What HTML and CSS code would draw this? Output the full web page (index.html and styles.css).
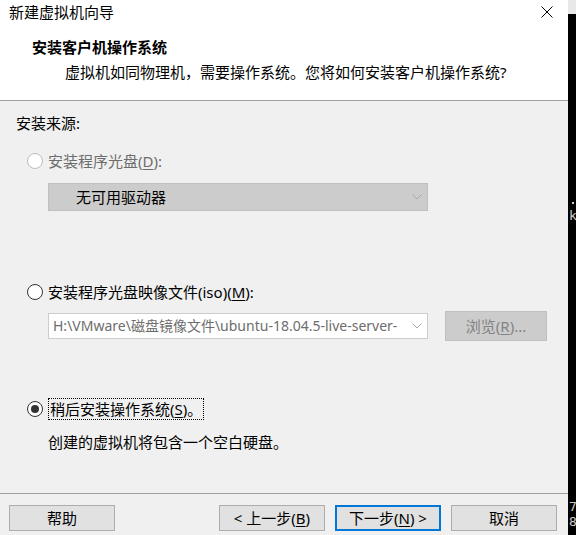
FILE: index.html
```html
<!DOCTYPE html>
<html lang="zh-CN">
<head>
<meta charset="utf-8">
<title>新建虚拟机向导</title>
<link rel="stylesheet" href="styles.css">
</head>
<body>
<div class="screen">
  <div class="dialog">
    <div class="top">
      <div class="titlebar">
        <span class="title">新建虚拟机向导</span>
        <svg class="close" viewBox="0 0 12 12" width="12" height="12"><path d="M0.5 0.5 L11.5 11.5 M11.5 0.5 L0.5 11.5" stroke="#000" stroke-width="1" fill="none"/></svg>
      </div>
      <div class="head-title">安装客户机操作系统</div>
      <div class="head-sub">虚拟机如同物理机，需要操作系统。您将如何安装客户机操作系统?</div>
    </div>
    <div class="body">
      <div class="section-label">安装来源:</div>
      <div class="radio-row row1 disabled">
        <span class="radio"></span>
        <span class="label">安装程序光盘(<u>D</u>):</span>
      </div>
      <div class="combo combo-disabled">
        <span class="combo-text">无可用驱动器</span>
        <svg class="chev" viewBox="0 0 10 6" width="10" height="6"><polyline points="0.5,0.5 5,5 9.5,0.5" fill="none" stroke="#a8a8a8" stroke-width="1"/></svg>
      </div>
      <div class="radio-row row2">
        <span class="radio"></span>
        <span class="label">安装程序光盘映像文件(iso)(<u>M</u>):</span>
      </div>
      <div class="iso-row">
        <div class="combo combo-iso">
          <span class="combo-text">H:\VMware\磁盘镜像文件\ubuntu-18.04.5-live-server-</span>
          <svg class="chev" viewBox="0 0 10 6" width="10" height="6"><polyline points="0.5,0.5 5,5 9.5,0.5" fill="none" stroke="#a8a8a8" stroke-width="1"/></svg>
        </div>
        <div class="btn btn-disabled">浏览(<u>R</u>)...</div>
      </div>
      <div class="radio-row row3">
        <span class="radio checked"></span>
        <span class="label focus">稍后安装操作系统(<u>S</u>)。</span>
      </div>
      <div class="desc">创建的虚拟机将包含一个空白硬盘。</div>
    </div>
    <div class="footer">
      <div class="btn">帮助</div>
      <div class="btn-group">
        <div class="btn">&lt; 上一步(<u>B</u>)</div>
        <div class="btn btn-default">下一步(<u>N</u>) &gt;</div>
        <div class="btn">取消</div>
      </div>
    </div>
  </div>
  <div class="strip">
    <div class="strip-top"></div>
    <div class="strip-dot"></div>
    <div class="strip-char k">k</div>
    <div class="strip-char n7">7</div>
    <div class="strip-char n8">8</div>
  </div>
</div>
</body>
</html>
```

FILE: styles.css
```css
* { box-sizing: border-box; }
html, body { margin: 0; padding: 0; }
body {
  width: 576px;
  height: 535px;
  overflow: hidden;
  font-family: "Noto Sans", "Noto Sans CJK SC", sans-serif;
  font-size: 15px;
  line-height: 20px;
  color: #000;
  background: #000;
}
u { text-decoration: underline; text-underline-offset: 2px; }

.screen { display: flex; width: 576px; height: 535px; }
.dialog {
  width: 568px;
  height: 535px;
  display: flex;
  flex-direction: column;
  background: #f0f0f0;
}

.top {
  height: 101px;
  flex: none;
  background: #fff;
  border-bottom: 1px solid #a0a0a0;
}
.titlebar {
  height: 23px;
  display: flex;
  align-items: center;
  justify-content: space-between;
  padding: 0 15px 0 9px;
}
.close { display: block; }
.head-title { font-weight: bold; margin: 14px 0 0 32px; }
.head-sub { margin: 5px 0 0 65px; }

.body {
  height: 393px;
  flex: none;
  border-bottom: 1px solid #a0a0a0;
  padding: 12px 0 0 16px;
}
.radio-row {
  display: flex;
  align-items: center;
  margin-left: 11px;
}
.row1 { margin-top: 18px; height: 20px; }
.row2 { margin-top: 71px; height: 20px; }
.row3 { margin-top: 57px; height: 22px; }
.radio {
  width: 16px;
  height: 16px;
  flex: none;
  border-radius: 50%;
  border: 1px solid #333;
  background: #fff;
  margin-right: 5px;
  display: flex;
  align-items: center;
  justify-content: center;
}
.disabled .radio { border-color: #bcbcbc; }
.disabled .label { color: #6d6d6d; }
.radio.checked::after {
  content: "";
  width: 8px;
  height: 8px;
  border-radius: 50%;
  background: #333;
}
.label.focus {
  border: 1px dotted #000;
  padding: 0 1px;
}

.combo {
  width: 380px;
  display: flex;
  align-items: center;
  justify-content: space-between;
  padding-right: 5px;
}
.combo-disabled {
  margin: 12px 0 0 32px;
  height: 28px;
  background: #cccccc;
  border: 1px solid #bfbfbf;
  padding-left: 27px;
}
.iso-row {
  display: flex;
  align-items: center;
  margin: 9px 0 0 32px;
  height: 30px;
}
.combo-iso {
  height: 26px;
  background: #fff;
  border: 1px solid #cccccc;
  padding-left: 4px;
}
.combo-iso .combo-text {
  white-space: nowrap;
  color: #6d6d6d;
  font-size: 14px;
}
.chev { display: block; flex: none; }

.btn {
  width: 106px;
  height: 26px;
  display: flex;
  align-items: center;
  justify-content: center;
  background: #e1e1e1;
  border: 1px solid #adadad;
  white-space: nowrap;
}
.btn-disabled {
  width: 102px;
  height: 30px;
  margin-left: 17px;
  background: #cccccc;
  border-color: #bfbfbf;
  color: #838383;
}
.btn-default { border: 2px solid #0078d7; }

.desc { margin: 12px 0 0 32px; }

.footer {
  flex: 1;
  display: flex;
  justify-content: space-between;
  align-items: flex-start;
  padding: 11px 11px 0 9px;
}
.btn-group { display: flex; gap: 10px; }

.strip {
  width: 8px;
  height: 535px;
  flex: none;
  overflow: hidden;
  background: #000;
  display: flex;
  flex-direction: column;
}
.strip-top { height: 14px; background: #e8e8e8; flex: none; }
.strip-dot {
  width: 2px;
  height: 2px;
  background: #cccccc;
  margin: 188px 0 0 4px;
  flex: none;
}
.strip-char {
  font-family: "DejaVu Sans Mono", monospace;
  font-size: 13px;
  line-height: 14px;
  color: #cccccc;
  margin-left: 1px;
  flex: none;
}
.k { margin-top: 5px; }
.n7 { margin-top: 277px; }
.n8 { margin-top: 1px; }
```
